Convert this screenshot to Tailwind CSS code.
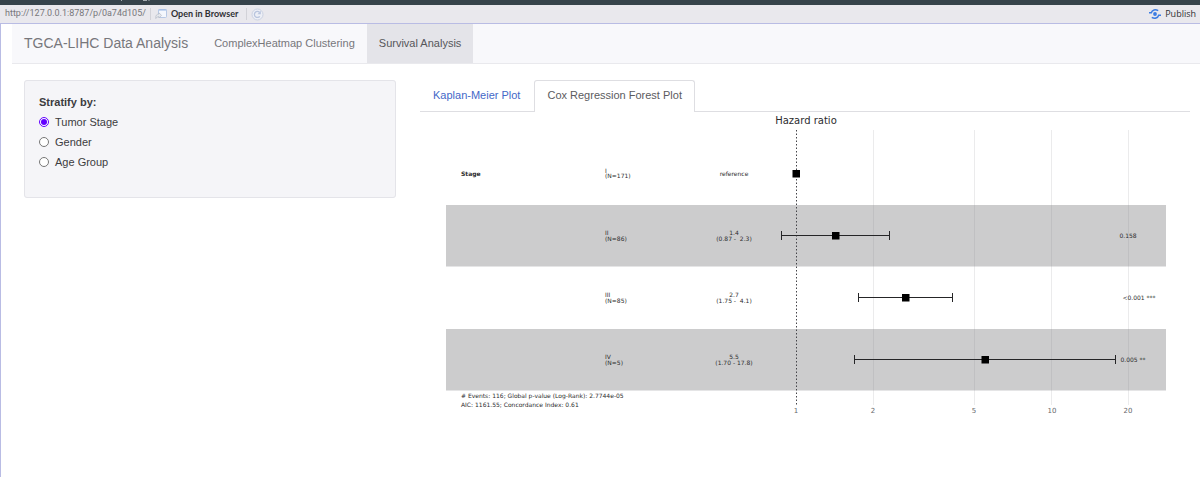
<!DOCTYPE html>
<html lang="en">
<head>
<meta charset="utf-8">
<title>TGCA-LIHC Data Analysis</title>
<script src="https://cdn.jsdelivr.net/npm/@tailwindcss/browser@4"></script>
</head>
<body class="flex min-h-screen flex-col bg-white font-['Liberation_Sans',sans-serif] text-[#3c3c40]">
<div class="h-[5px] w-full bg-[#36434b]">
  <svg class="h-[5px] w-[160px]" viewBox="0 0 160 5" aria-hidden="true"><path d="M121.5 0v1M143 .5h4M149 0v1" stroke="#a5adb2" fill="none"/></svg>
</div>
<header class="flex h-[19px] items-center border-b border-[#b9bce4] bg-[#e9e8ed] pr-1 pl-[5px] font-['Open_Sans',sans-serif] text-[9px] text-[#303034]">
  <span class="font-['Roboto',sans-serif] text-[#77777b]">http://127.0.0.1:8787/p/0a74d105/</span>
  <span class="ml-1 h-3 w-px bg-[#d2d2d8]"></span>
  <button class="ml-1 flex items-center gap-1 font-['Lato',sans-serif] font-bold">
    <svg class="h-3 w-3" viewBox="0 0 12 12" fill="none" aria-hidden="true"><rect x="3.5" y="1.5" width="8" height="8" rx="1" fill="#f4f7fd" stroke="#b7c8e5"/><path d="M3.5 2h8" stroke="#98b7e5"/><path d="M.8 10.500c-.5-3 1-4.500 3.200-4.500V4.800l2.500 2.600L4 10V8.700c-1.500 0-2.500.5-3.200 1.800z" fill="#e5e7ec" stroke="#b5bac5" stroke-width=".7"/></svg>
    Open in Browser
  </button>
  <span class="ml-2 h-3 w-px bg-[#d2d2d8]"></span>
  <button class="ml-1" aria-label="Refresh">
    <svg class="h-[13px] w-[13px]" viewBox="0 0 13 13" fill="none" aria-hidden="true"><circle cx="6.500" cy="6.500" r="5.500" fill="#edeff6" stroke="#cbd2e2"/><path d="M8.800 8.300A3 3 0 1 1 8.500 4.300" stroke="#b9c5de" stroke-width="1.300"/><path d="M9.800 2.800v3.400H6.400z" fill="#b9c5de"/></svg>
  </button>
  <button class="ml-auto flex items-center gap-1 font-medium">
    <svg class="h-3 w-3" viewBox="0 0 12 12" fill="none" aria-hidden="true"><circle cx="6" cy="6" r="1.900" fill="#3c7ce2"/><path d="M0 4.700h2.300C3.200 1.700 6.500 1 9.200 2.700M12 7.300H9.700C8.800 10.300 5.500 11 2.800 9.300" stroke="#3c7ce2" stroke-width="1.500"/></svg>
    Publish
  </button>
</header>
<div class="flex-1 border-l border-[#b9bce4] pl-[11px]">
  <nav class="flex h-10 items-stretch border-b border-[#e9e9ed] bg-[#f8f8fb] text-[11px] text-[#77777b]">
    <a href="#" class="flex items-center pr-3.5 pl-3 text-[14px]">TGCA-LIHC Data Analysis</a>
    <a href="#" class="flex items-center px-3">ComplexHeatmap Clustering</a>
    <a href="#" aria-current="page" class="flex items-center bg-[#e4e4e9] px-3 text-[#56565a]">Survival Analysis</a>
  </nav>
  <main class="grid grid-cols-[372fr_770fr] gap-6 pt-4 pr-2.5 pl-3">
    <fieldset class="self-start rounded-[3px] border border-[#e4e4e9] bg-[#f5f5f8] px-3.5 pt-[13px] pb-[27px] text-[11px]">
      <legend class="float-left w-full leading-4 font-bold">Stratify by:</legend>
      <div class="clear-left flex flex-col">
        <label class="flex h-5 items-center gap-1.5 pt-1"><input type="radio" name="strat" checked class="h-2.5 w-2.5 accent-[#6200ff]">Tumor Stage</label>
        <label class="flex h-5 items-center gap-1.5 pt-1"><input type="radio" name="strat" class="h-2.5 w-2.5">Gender</label>
        <label class="flex h-5 items-center gap-1.5 pt-1"><input type="radio" name="strat" class="h-2.5 w-2.5">Age Group</label>
      </div>
    </fieldset>
    <section class="min-w-0">
      <div class="flex h-8 gap-0.5 border-b border-[#dedee2] text-[11px]" role="tablist">
        <button role="tab" class="border-l border-transparent px-3 text-[#4468c8]">Kaplan-Meier Plot</button>
        <button role="tab" aria-selected="true" class="-mb-px rounded-t-[3px] border border-b-0 border-[#dedee2] bg-white px-3 pb-[3px] text-[#5b5b60]">Cox Regression Forest Plot</button>
      </div>
      <svg class="block w-full font-['DejaVu_Sans',sans-serif] text-[6px]" viewBox="420 112 770 312" role="img" aria-label="Hazard ratio forest plot" fill="#2c2c2e">
        <text x="806" y="124" text-anchor="middle" class="text-[10px]">Hazard ratio</text>
        <path d="M446 205h720v61.500H446zM446 329h720v61.500H446z" fill="#cccccd"/>
        <path d="M873.500 130v275M974.500 130v275M1051.500 130v275M1128.500 130v275" stroke="#808088" stroke-opacity=".16"/>
        <path d="M796.500 130v275" stroke="#444449" stroke-dasharray="1.500 2"/>
        <g stroke="#252527" fill="none">
          <path d="M781.500 235.500h108M781.500 231v9M889.500 231v9M858.500 297.500h94M858.500 293v9M952.500 293v9M855 359.500h261M854.500 355v9M1115.500 355v9"/>
        </g>
        <path d="M792.500 170h7.500v7.500h-7.500zM832 232h7.500v7.500H832zM902 294h7.500v7.500H902zM981.500 356h7.500v7.500h-7.500z" fill="#000"/>
        <text x="461" y="176" font-weight="bold">Stage</text>
        <text x="605" y="173">I</text><text x="605" y="178">(N=171)</text>
        <text x="605" y="235">II</text><text x="605" y="241">(N=86)</text>
        <text x="605" y="297">III</text><text x="605" y="303">(N=85)</text>
        <text x="605" y="359">IV</text><text x="605" y="365">(N=5)</text>
        <g text-anchor="middle">
          <text x="734" y="176">reference</text>
          <text x="734" y="235">1.4</text><text x="734" y="241" xml:space="preserve">(0.87 -  2.3)</text>
          <text x="734" y="297">2.7</text><text x="734" y="303" xml:space="preserve">(1.75 -  4.1)</text>
          <text x="734" y="359">5.5</text><text x="734" y="365">(1.70 - 17.8)</text>
          <text x="1128" y="238">0.158</text>
          <text x="1139" y="300">&lt;0.001 ***</text>
          <text x="1133" y="362">0.005 **</text>
        </g>
        <text x="461" y="398"># Events: 116; Global p-value (Log-Rank): 2.7744e-05</text>
        <text x="461" y="407">AIC: 1161.55; Concordance Index: 0.61</text>
        <g text-anchor="middle" fill="#68686c" class="text-[7px]">
          <text x="796" y="413">1</text><text x="873" y="413">2</text><text x="974" y="413">5</text><text x="1052" y="413">10</text><text x="1128" y="413">20</text>
        </g>
      </svg>
    </section>
  </main>
</div>
</body>
</html>
